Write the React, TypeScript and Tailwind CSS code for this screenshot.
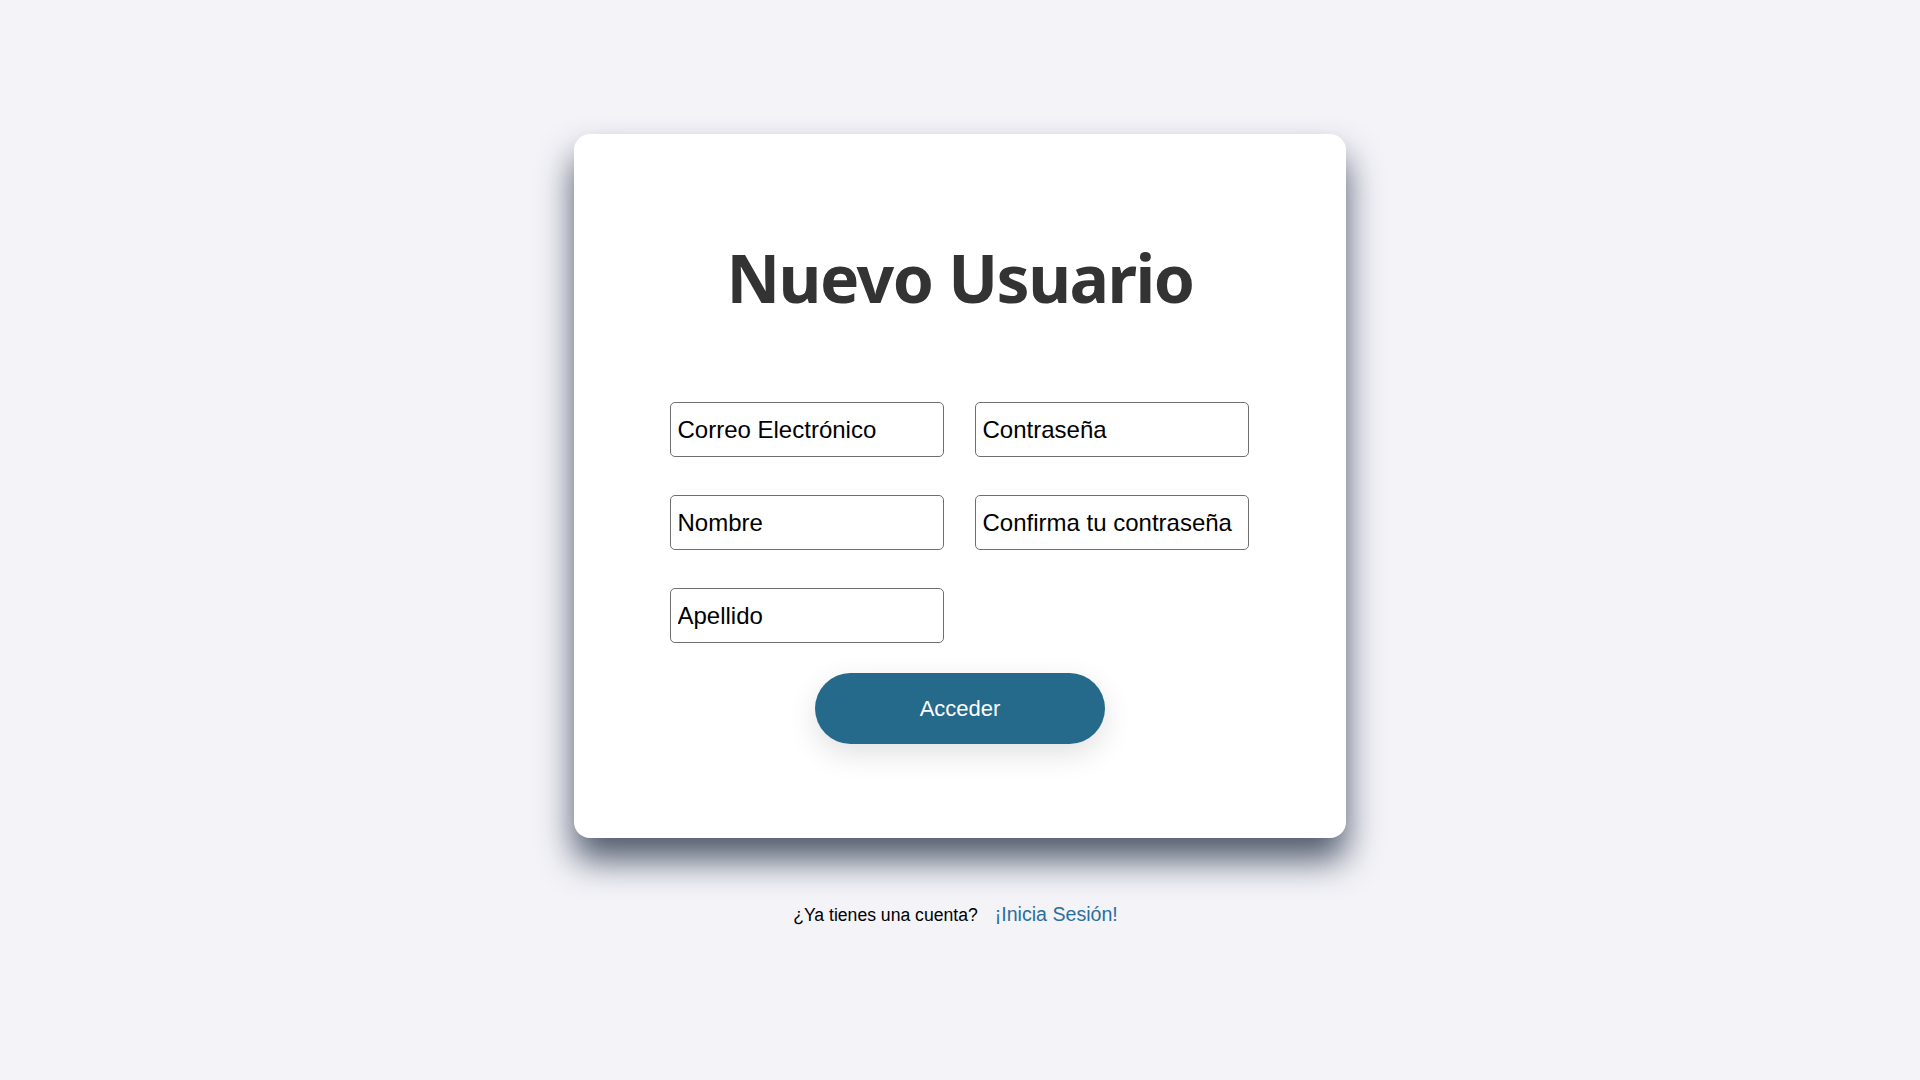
import React from "react";

const fields = [
  "Correo Electrónico",
  "Contraseña",
  "Nombre",
  "Confirma tu contraseña",
  "Apellido",
];

export default function App() {
  return (
    <div className="min-h-screen w-full bg-[#f3f3f8] flex flex-col items-center pt-[134px] font-['Liberation_Sans',Arial,sans-serif]">
      <div className="w-[772px] h-[704px] bg-white rounded-[16px] shadow-[0_22px_34px_rgba(40,52,75,0.8)] flex flex-col items-center pt-[110px]">
        <h1 className="text-center text-[66px] leading-none font-bold tracking-[-1.5px] text-[#333333] font-['Noto_Sans','Open_Sans',sans-serif]">
          Nuevo Usuario
        </h1>
        <div className="grid grid-cols-[274px_274px] gap-x-[31px] gap-y-[38px] mt-[92px] mr-[2px]">
          {fields.map((f) => (
            <input
              key={f}
              type="text"
              placeholder={f}
              className="h-[55px] w-[274px] border border-[#6f6f6f] rounded-[5px] px-[7px] text-[24px] text-black placeholder:text-black bg-white outline-none font-['Liberation_Sans',Arial,sans-serif]"
            />
          ))}
        </div>
        <div className="flex justify-center mt-[30px]">
          <button className="w-[290px] h-[71px] rounded-full bg-[#266a8b] text-white text-[22px] shadow-[0_10px_30px_rgba(0,0,0,0.12)] font-['Liberation_Sans',Arial,sans-serif]">
            Acceder
          </button>
        </div>
      </div>
      <div className="mt-[62px] flex items-baseline justify-center gap-[17px] pr-[9px]">
        <span className="text-[17.6px] text-black">¿Ya tienes una cuenta?</span>
        <a href="#" className="text-[19.6px] text-[#2a6f9c]">
          ¡Inicia Sesión!
        </a>
      </div>
    </div>
  );
}
